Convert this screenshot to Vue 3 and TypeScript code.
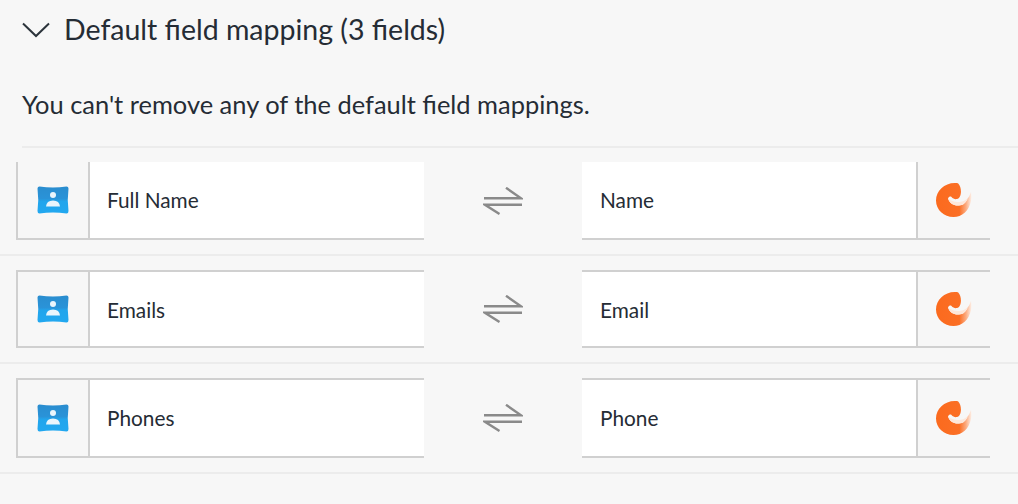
<template>
  <div class="mapping-view">
    <div class="section-header">
      <svg class="chevron" width="30" height="16" viewBox="0 0 30 16">
        <path d="M2 1.5 L15 14 L28 1.5" fill="none" stroke="#2c343c" stroke-width="2" />
      </svg>
      <h2>Default field mapping (3 fields)</h2>
    </div>
    <p class="section-note">You can't remove any of the default field mappings.</p>

    <div class="mapping-list">
      <div v-for="row in rows" :key="row.left" class="mapping-row" :class="row.kind">
        <div class="field-box">
          <div class="icon-cell left-cell">
            <svg width="32" height="28" viewBox="0 0 32 28">
              <defs>
                <linearGradient id="cardBlue" x1="0" y1="0" x2="0" y2="1">
                  <stop offset="0" stop-color="#2a8dcf" />
                  <stop offset="0.45" stop-color="#2a93d8" />
                  <stop offset="0.55" stop-color="#22a5ec" />
                  <stop offset="1" stop-color="#22a8f0" />
                </linearGradient>
              </defs>
              <path d="M2.5 0.5 Q16 2.5 29.5 0.5 Q31.5 0.5 31.5 2.5 Q30 14 31.5 25 Q31.5 27.5 29.5 27.5 Q16 25.5 2.5 27.5 Q0.5 27.5 0.5 25 Q2 14 0.5 2.5 Q0.5 0.5 2.5 0.5 Z" fill="url(#cardBlue)" />
              <circle cx="16" cy="9" r="3" fill="#eaf5fc" />
              <path d="M9 20.5 Q9.5 14.5 16 14.5 Q22.5 14.5 23 20.5 Z" fill="#eaf5fc" />
            </svg>
          </div>
          <div class="field-name">{{ row.left }}</div>
        </div>

        <div class="swap">
          <svg width="40" height="28" viewBox="0 0 40 28">
            <path d="M1 11.2 H38 L23 0.8 M39 17.8 H2 L16.5 27" fill="none" stroke="#8a8a8a" stroke-width="2.4" />
          </svg>
        </div>

        <div class="field-box target-box">
          <div class="field-name">{{ row.right }}</div>
          <div class="icon-cell right-cell">
            <svg width="36" height="34" viewBox="0 0 36 34">
              <defs>
                <linearGradient id="flameFade" x1="0" y1="0" x2="1" y2="0">
                  <stop offset="0" stop-color="#fb6a1e" />
                  <stop offset="0.66" stop-color="#fb6f25" />
                  <stop offset="0.84" stop-color="#fcaa7e" />
                  <stop offset="1" stop-color="#fdf0e8" />
                </linearGradient>
              </defs>
              <path d="M22 0.3 C10 -1.5 0 7 0 17.5 C0 27 8 34 17.5 34 C26 34 33 28 35 18 C35.8 15 35.6 12 35 9 C34 12 33 14 31.7 15.3 C30 20 27 22.5 23 22.5 C18 23 13.5 20.5 12 15.5 C13 13.5 14.5 13 15.5 14 C17 15.7 19 16.5 21 16 C23.5 15.5 25 12 25 8.7 C25 5.5 24 2.5 22 0.3 Z" fill="url(#flameFade)" />
              <path d="M12 15.5 C13.5 20.5 18 23 23 22.5 C27 22.5 30 20 31.7 15.3 C30 17 27 18.8 23.5 19 C19 19.5 15 18 12 15.5 Z" fill="#fde7da" />
            </svg>
          </div>
        </div>
      </div>
    </div>
  </div>
</template>

<script setup lang="ts">
interface MappingRow {
  left: string
  right: string
  kind: string
}

const rows: MappingRow[] = [
  { left: 'Full Name', right: 'Name', kind: 'first' },
  { left: 'Emails', right: 'Email', kind: '' },
  { left: 'Phones', right: 'Phone', kind: 'tall' }
]
</script>

<style>
html, body {
  margin: 0;
  background: #f7f7f7;
}
</style>

<style scoped>
.mapping-view {
  width: 1018px;
  height: 504px;
  overflow: hidden;
  background: #f7f7f7;
  color: #252c35;
  font-family: Lato, sans-serif;
}

.section-header {
  display: flex;
  align-items: center;
  gap: 13px;
  height: 60px;
  padding-left: 21px;
}

.section-header h2 {
  margin: 0 0 2px;
  font-size: 28.5px;
  font-weight: 400;
  line-height: 58px;
}

.section-note {
  box-sizing: border-box;
  margin: 0 0 0 22px;
  height: 88px;
  font-size: 25.45px;
  line-height: 88px;
  border-bottom: 2px solid #ececec;
}

.mapping-row {
  display: flex;
  padding: 14px 28px 14px 16px;
  border-bottom: 2px solid #ececec;
}

.field-box {
  flex: 0 0 408px;
  display: flex;
  box-sizing: border-box;
  height: 78px;
  border-top: 2px solid #d0d0d0;
  border-bottom: 2px solid #d0d0d0;
  border-left: 2px solid #d0d0d0;
}

.tall .field-box {
  height: 80px;
}

.first .field-box {
  border-top: 0;
}

.target-box {
  border-left: 0;
}

.icon-cell {
  flex: 0 0 70px;
  display: flex;
  align-items: center;
  justify-content: center;
}

.left-cell {
  border-right: 2px solid #d0d0d0;
}

.right-cell {
  flex-basis: 72px;
  border-left: 2px solid #d0d0d0;
}

.field-name {
  flex: 1;
  display: flex;
  align-items: center;
  padding-left: 17px;
  background: #fff;
  font-size: 20.8px;
}

.first .field-name,
.tall .field-name {
  padding-bottom: 2px;
}

.target-box .field-name {
  padding-left: 18px;
}

.swap {
  flex: 0 0 158px;
  display: flex;
  align-items: center;
  justify-content: center;
}
</style>
